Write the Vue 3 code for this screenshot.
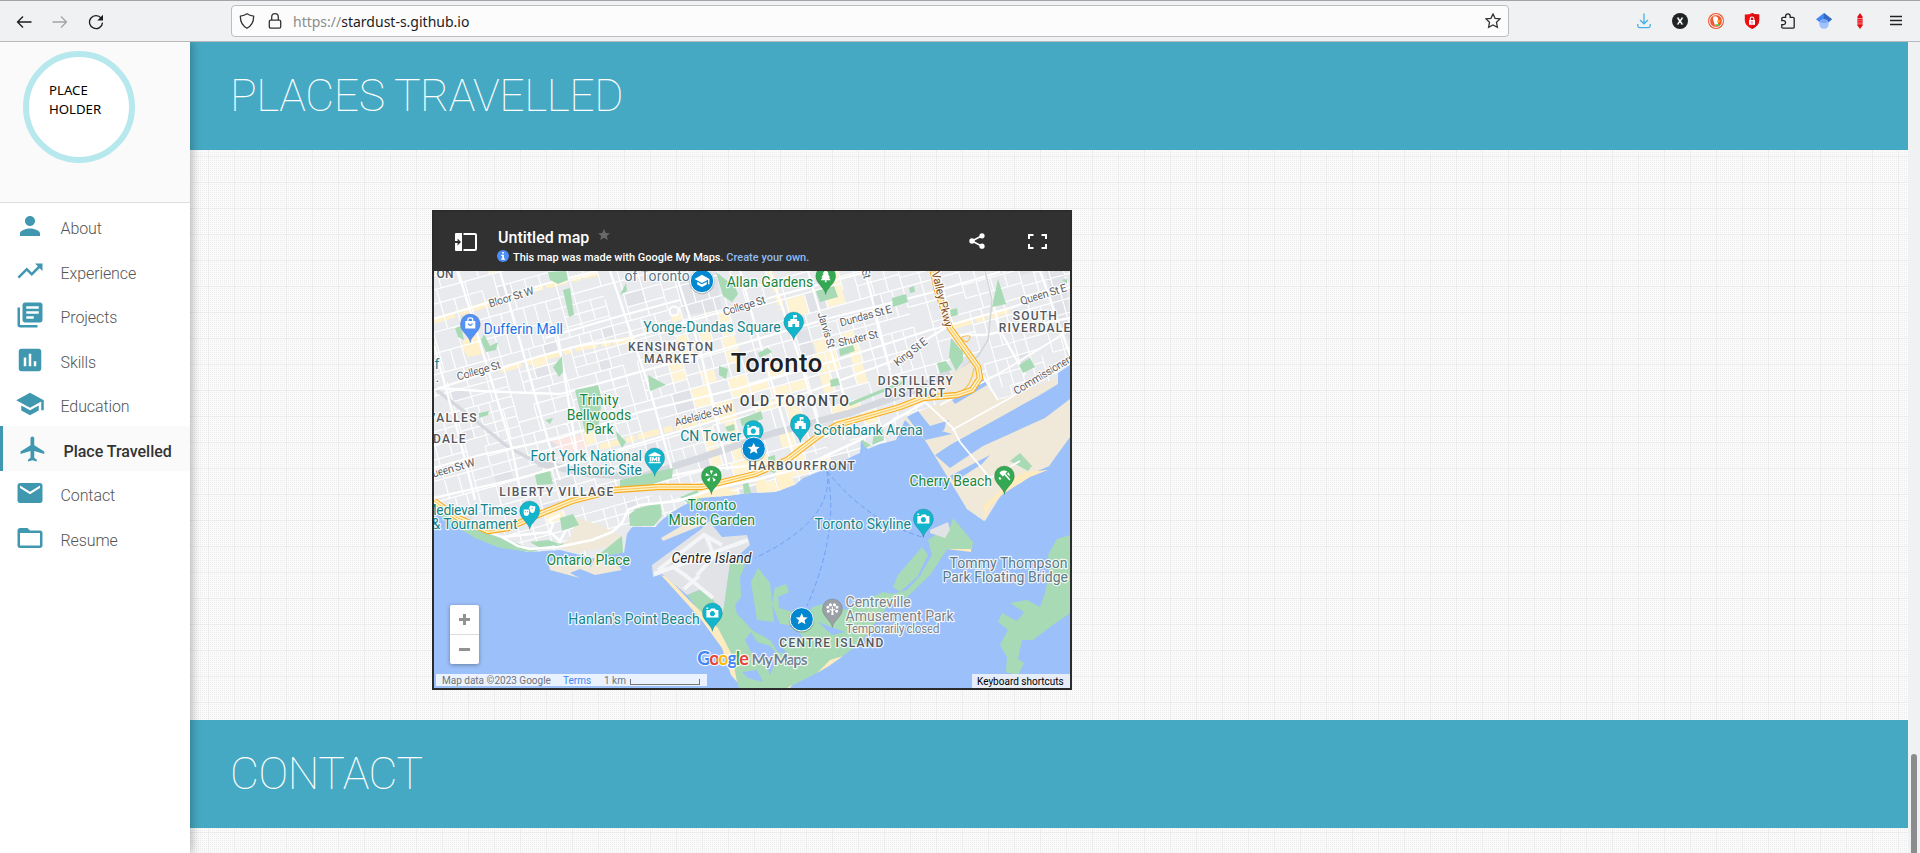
<script setup>
const menu = [
  { label: 'About', d: 'M12 12c2.21 0 4-1.79 4-4s-1.79-4-4-4-4 1.79-4 4 1.79 4 4 4zm0 2c-2.67 0-8 1.34-8 4v2h16v-2c0-2.66-5.33-4-8-4z' },
  { label: 'Experience', d: 'M16 6l2.29 2.29-4.88 4.88-4-4L2 16.59 3.41 18l6-6 4 4 6.3-6.29L22 12V6z' },
  { label: 'Projects', d: 'M4 6H2v14c0 1.1.9 2 2 2h14v-2H4V6zm16-4H8c-1.1 0-2 .9-2 2v12c0 1.1.9 2 2 2h12c1.1 0 2-.9 2-2V4c0-1.1-.9-2-2-2zm-1 9H9V9h10v2zm-4 4H9v-2h6v2zm4-8H9V5h10v2z' },
  { label: 'Skills', d: 'M19 3H5c-1.1 0-2 .9-2 2v14c0 1.1.9 2 2 2h14c1.1 0 2-.9 2-2V5c0-1.1-.9-2-2-2zM9 17H7v-7h2v7zm4 0h-2V7h2v10zm4 0h-2v-4h2v4z' },
  { label: 'Education', d: 'M5 13.18v4L12 21l7-3.82v-4L12 17l-7-3.82zM12 3L1 9l11 6 9-4.91V17h2V9L12 3z' },
  { label: 'Place Travelled', active: true, d: 'M21 16v-2l-8-5V3.5c0-.83-.67-1.5-1.5-1.5S10 2.67 10 3.5V9l-8 5v2l8-2.5V19l-2 1.5V22l3.5-1 3.5 1v-1.5L13 19v-5.5l8 2.5z' },
  { label: 'Contact', d: 'M20 4H4c-1.1 0-1.99.9-1.99 2L2 18c0 1.1.9 2 2 2h16c1.1 0 2-.9 2-2V6c0-1.1-.9-2-2-2zm0 4l-8 5-8-5V6l8 5 8-5v2z' },
  { label: 'Resume', d: 'M20 6h-8l-2-2H4c-1.1 0-1.99.9-1.99 2L2 18c0 1.1.9 2 2 2h16c1.1 0 2-.9 2-2V8c0-1.1-.9-2-2-2zm0 12H4V8h16v10z' },
]

// Labels: text, x, baseline, width, kind, rotation
const labels = [
  ['Dufferin Mall', 483, 333.7, 79.5, 'blue'],
  ['Yonge-Dundas Square', 642.8, 331.7, 137.5, 'teal'],
  ['CN Tower', 679.7, 440.7, 61, 'teal'],
  ['Scotiabank Arena', 813, 434, 109, 'teal'],
  ['Fort York National', 530, 460.7, 111.5, 'teal'],
  ['Historic Site', 566, 474.7, 75.5, 'teal'],
  ['Medieval Times', 424, 514, 93, 'teal'],
  ['& Tournament', 431, 528, 86, 'teal'],
  ["Hanlan's Point Beach", 567.8, 623, 131.5, 'teal'],
  ['Toronto Skyline', 814, 528.7, 96.5, 'teal'],
  ['f', 434, 368, 4, 'teal'],
  ['.', 435, 381.5, 3, 'teal'],
  ['Allan Gardens', 726.2, 286, 86.5, 'green'],
  ['Trinity', 579, 404.7, 39, 'green'],
  ['Bellwoods', 566.2, 419, 64.5, 'green'],
  ['Park', 585, 433, 28, 'green'],
  ['Ontario Place', 546, 564.7, 83.5, 'green'],
  ['Toronto', 687, 509.8, 48.8, 'green'],
  ['Music Garden', 668, 524, 86.5, 'green'],
  ['Cherry Beach', 909, 485.8, 82.5, 'green'],
  ['of Toronto', 624, 280, 65.3, 'slate'],
  ['Tommy Thompson', 949, 567, 118, 'slate'],
  ['Park Floating Bridge', 942, 581, 125.5, 'slate'],
  ['Centreville', 845, 606, 65.3, 'grey'],
  ['Amusement Park', 845, 620, 108, 'grey'],
  ['Temporarily closed', 845.3, 632, 93.8, 'grey small'],
  ['Centre Island', 671, 562.7, 80, 'island'],
  ['KENSINGTON', 627.4, 350, 85, 'area'],
  ['MARKET', 643.4, 362, 54, 'area'],
  ['VALLES', 427, 421, 49, 'area'],
  ['DALE', 432.5, 442.8, 32.5, 'area'],
  ['ON', 436, 277, 17, 'area'],
  ['SOUTH', 1012.2, 319, 44, 'area'],
  ['RIVERDALE', 998.2, 331, 71.5, 'area'],
  ['DISTILLERY', 877.3, 384, 75, 'area'],
  ['DISTRICT', 884, 396, 60.5, 'area'],
  ['HARBOURFRONT', 747.8, 469, 106.5, 'area'],
  ['LIBERTY VILLAGE', 498.8, 495, 114, 'area'],
  ['CENTRE ISLAND', 778.8, 646, 104, 'area'],
  ['OLD TORONTO', 739.3, 405, 109, 'district'],
  ['Toronto', 730.3, 371.7, 91.5, 'city'],
  ['Bloor St W', 489.5, 307, 46.5, 'road', -17],
  ['College St', 457.5, 380, 45, 'road', -16],
  ['College St', 723.7, 315.3, 44, 'road', -17],
  ['Jarvis St', 817, 313, 37, 'road', 73],
  ['St', 861, 270, 9, 'road', 75],
  ['Dundas St E', 840.5, 326, 53.5, 'road', -15.5],
  ['Shuter St', 838.7, 346, 40.5, 'road', -13],
  ['King St E', 897, 366.3, 39, 'road', -38],
  ['Queen St E', 1021, 304.5, 48, 'road', -17],
  ['Commissioners', 1015.7, 394.5, 69, 'road', -31],
  ['Adelaide St W', 675.3, 425.8, 60, 'road', -15],
  ['Queen St W', 426.5, 479, 50.5, 'road', -16],
  ['Valley Pkwy', 931, 272, 57, 'parkway', 76],
]

const pins = [
  [470.3, 342.7, '#5491f5', 'bag'],
  [825.7, 294.7, '#34a853', 'tree'],
  [793.7, 340.5, '#12b5cb', 'fort'],
  [800.3, 442.5, '#12b5cb', 'fort'],
  [753.3, 449, '#12b5cb', 'camera'],
  [654.7, 476.5, '#12b5cb', 'museum'],
  [711.4, 494.5, '#34a853', 'flower'],
  [529.7, 529.5, '#12b5cb', 'masks'],
  [712.4, 631.5, '#12b5cb', 'camera'],
  [1004.4, 494.5, '#34a853', 'beach'],
  [923.4, 537.5, '#12b5cb', 'camera'],
  [832.4, 627.5, '#9aa0a6', 'oak'],
]

const glyphs = {
  bag: 'M-5 -3.2H5V4.2H-5ZM-3 -3.2V-4.6Q-3 -7 0 -7Q3 -7 3 -4.6V-3.2H1.8V-4.6Q1.8 -5.8 0 -5.8Q-1.8 -5.8 -1.8 -4.6V-3.2ZM-2.8 -.6Q0 4.2 2.8 -.6L1.6 -1Q0 1.5 -1.6 -1Z',
  tree: 'M0 -7L3.2 -2.5H2L4.5 1.2H3L5 4H.8V6H-.8V4H-5L-3 1.2H-4.5L-2 -2.5H-3.2Z',
  fort: 'M-5.5 5V-1H-3.4V-3H-.6V-7H3.2V-4.6H.6V-3H3.4V-1H5.5V5H1.3V2H-1.3V5Z',
  camera: 'M-6 -3H-2.5L-1.5 -4.5H2.5L3.5 -3H6V4.5H-6ZM0 -2A2.6 2.6 0 1 0 .01 -2ZM-6 -5.6H-4.2V-4H-6Z',
  museum: 'M0 -6L6 -3V-1.8H-6V-3ZM-5 -1H-3.2V3.5H-5ZM3.2 -1H5V3.5H3.2ZM-2.6 3.5V-1H-1.4L0 1L1.4 -1H2.6V3.5H1.4V1.2L0 3L-1.4 1.2V3.5ZM-6 4H6V5.2H-6Z',
  flower: 'M0 -1.3L-1.6 -5.6H1.6ZM1.3 -.5L5.2 -3L6 -.1ZM1 1L4.6 3.9L2 5.7ZM-1 1L-2 5.7L-4.6 3.9ZM-1.3 -.5L-6 -.1L-5.2 -3Z',
  masks: 'M-6 -1.5H-.5V2Q-1 5 -3.2 5Q-6 5 -6 2ZM.5 -5.5L5.8 -4.6L5 0Q4 2.5 1.5 1.6L.2 0V-2.3L-1 -2.3ZM-4.8 .2H-3.8V1.2H-4.8ZM-2.6 .2H-1.6V1.2H-2.6ZM2 -3.4H3V-2.4H2Z',
  beach: 'M-6 2L-4.5 1L-3 2.6L-4.5 4ZM-5 -3A5.5 5.5 0 0 1 3 -4.5L1 -2.5L6 3.5L5 4.5L0 -1.2L-1.6 .4ZM4 -3.8A5.5 5.5 0 0 1 5.4 .5L2.5 -2.3Z',
  oak: 'M-1.2 6L-.7 2L-3 .2L-2.4 -.6L-.6 .6V-2.4H.6V.6L2.4 -.6L3 .2L.7 2L1.2 6ZM-2 -5.8A1.6 1.6 0 1 0 -1.9 -5.8ZM2 -5.8A1.6 1.6 0 1 0 2.1 -5.8ZM-4.6 -3.4A1.5 1.5 0 1 0 -4.5 -3.4ZM4.6 -3.4A1.5 1.5 0 1 0 4.7 -3.4ZM-4.2 .6A1.5 1.5 0 1 0 -4.1 .6ZM4.2 .6A1.5 1.5 0 1 0 4.3 .6Z',
}

// Land masses, parks and other filled areas
const mainland = 'M434 271H1070V437L1060 448 1049 466 1030 474 1022 482 1003 492 986 505 984 521 967 509 950 477 935 455 925 440 920 430 905 420 896 440 880 444 868 449 861 440 860 453 840 462 823 470 803 478 795 485 775 492 750 493 725 496 697 498 672 512 662 520 655 527 632 527 627 534 624 553 615 549 600 560 560 550 530 552 500 547 475 537 445 519 434 508Z'
const portlands = 'M903 418L952 398 983 384 1000 400 1070 373V437L1049 466 1030 474 1003 492 985 521 967 509 925 440Z'
const greens = [
  'M434 507L456 521 484 531 505 538 530 549 560 548 564 543 531 552 500 548 475 538 445 520Z',
  'M548 272L566 271 568 280 558 284 550 280Z', 'M563 290L570 288 574 315 569 317Z',
  'M455 328L461 326 464 340 458 337Z', 'M484 334L490 346 498 342 496 350 486 352 481 340Z',
  'M553 367L562 356 563 372 559 377Z', 'M575 390L598 385 602 399 598 430 585 432 580 410Z',
  'M648 375L666 385 650 391Z', 'M719 366L728 369 726 379 719 375Z', 'M716 272L735 287 738 294 732 302 723 296Z',
  'M816 291L834 286 838 297 820 302Z', 'M892 298L906 294 908 302 893 307Z', 'M909 288L914 286 915 292 910 293Z',
  'M998 279L1006 304 992 307Z', 'M950 310L957 308 958 315 951 317Z', 'M951 338L963 352 963 361 956 371 949 357Z',
  'M937 363L946 361 952 370 940 373Z', 'M839 349L853 345 855 351 840 356Z', 'M830 380L838 378 840 385 831 387Z',
  'M1019 365L1030 358 1035 367 1023 373Z', 'M620 486L620 480 673 468 672 478 640 488 622 490Z',
  'M740 419L761 411 763 419 742 426Z', 'M560 518L573 514 579 525 562 531Z', 'M629 515L636 509 660 502 662 516 654 526 630 526Z',
  'M535 475L550 471 553 484 537 485Z', 'M479 413L489 411 488 415 479 418Z', 'M545 420L553 418 550 424Z',
  'M848 403L905 380 905 383 850 406Z', 'M758 353L768 348 772 352 760 358Z', 'M725 427L734 424 735 430 728 432Z',
  'M865 448L861 439 872 446 874 433 883 429 884 440Z', 'M530 542L548 540 560 544 540 548Z', 'M1010 461L1020 453 1032 466 1028 471Z',
  'M616 431L626 442 622 448 617 438Z', 'M620 295L626 283 627 291Z', 'M1062 280L1067 279 1067 284Z', 'M680 497L697 490 702 500 690 505Z',
  'M743 484L748 482 751 493 744 494ZM768 457L775 455 776 474 768 470Z',
  'M597 556L622 536 623 552 618 554Z',
]
const islands = [
  'M730 563L743 560 745 566 740 577 741 597 735 605 737 614 745 622 752 630 768 637 793 627 813 607 830 602 845 610 883 592 893 594 907 590 920 576 932 555 928 540 940 532 948 535 947 549 930 575 907 597 887 607 860 643 840 658 817 673 787 688H739L730 660 716 632 687 595 705 588 723 613Z',
  'M922 547L928 555 917 577 900 592 893 587 898 575Z',
  'M953 518L973 542 972 550 945 549 948 533Z',
  'M758 568L770 583 774 622 757 620 751 582Z',
  'M775 588L786 584 789 592 778 597 779 608 793 612 798 626 780 624 772 604Z',
  'M1070 535L1057 539 1048 555 1050 570 1045 593 1040 607 1027 600 1010 603 1024 612 1017 621 1002 613 998 622 1008 630 1000 645 1007 657 1006 672 1018 675 1024 663 1018 659 1022 640 1033 640 1050 627 1070 613Z',
]
const lagoons = [
  'M741 598L757 620 772 625 796 630 805 638 790 637 780 645 789 655 778 652 770 640 755 632 748 624 738 614Z',
  'M745 640L751 632 757 642 770 646 778 655 770 675 765 662 754 658Z', 'M742 672L757 670 763 682 748 678Z',
  'M818 622L845 632 832 635Z',
]
const waters = [
  'M935 455L950 445 1040 395 1058 384 1058 373 1070 365V399L1045 418 983 446 950 468Z',
  'M907 417L918 411 930 426 950 420 938 430 952 434 925 440Z', 'M934 429L946 424 944 430 936 434Z',
  'M952 400L984 379 987 385 955 404Z', 'M950 476L990 455 982 464 954 482Z',
]
const beaches = [
  'M661 575L667 577 690 601 718 628 732 655 737 682 731 675 722 648 700 618Z',
  'M984 505L1003 488 1006 482 1025 472 1048 470 1030 477 1003 494 989 507 985 521Z',
  'M947 549L971 549 971 552ZM817 673L830 660 843 656 829 666Z', 'M787 688L792 685 790 688Z',
]
const sands = [
  'M570 538L577 518 600 525 621 536 618 545 590 550 575 552 558 547Z',
  'M548 563L557 558 575 564 580 557 591 567 597 553 606 551 604 565 617 564 622 570 595 575 580 569 570 573 580 578 550 570Z',
  'M661 538L700 515 706 522 700 526 663 541Z', 'M924 395L945 377 975 360 979 378 962 390Z',
]

// City blocks and side streets, laid out in the tilted frame of the street grid
let seed = 41
const rnd = () => { seed = (seed * 16807) % 2147483647; return seed / 2147483647 }
const TILT = (15.5 * Math.PI) / 180
const toPage = (u, v) => [434 + u * Math.cos(TILT) + v * Math.sin(TILT), 319 - u * Math.sin(TILT) + v * Math.cos(TILT)]
const creamBlocks = []
const greyBlocks = []
let sideStreets = ''
for (let u = -120; u < 740; u += 58) {
  for (let v = -110; v < 330; v += 41) {
    const [px, py] = toPage(u + 29, v + 20)
    const downtown = px > 700 && px < 850 && py > 290
    const cols = 3 + Math.floor(rnd() * 3)
    const rows = 1 + Math.floor(rnd() * 3)
    for (let i = 0; i < cols; i++) {
      const x = u + (58 * i) / cols
      const y0 = rnd() < 0.3 ? v + 41 / (rows + 1) : v
      const y1 = rnd() < 0.25 ? v + (41 * rows) / (rows + 1) : v + 41
      sideStreets += `M${x.toFixed(1)} ${y0.toFixed(1)}V${y1.toFixed(1)}`
      for (let j = 0; j <= rows; j++) {
        const box = { x: x + 0.8, y: v + (41 * j) / (rows + 1) + 0.8, w: 58 / cols - 1.6, h: 41 / (rows + 1) - 1.6 }
        const r = rnd()
        if (r < (downtown ? 0.32 : 0.02)) creamBlocks.push(box)
        else if (r > 0.95) greyBlocks.push(box)
      }
    }
    for (let j = 0; j <= rows; j++) {
      const a = rnd() < 0.3 ? 58 / cols : 0
      sideStreets += `M${(u + a).toFixed(1)} ${(v + (41 * j) / (rows + 1)).toFixed(1)}H${u + 58}`
    }
  }
}

const avenues = 'M434 319L480 305 545 284 597 271M434 390L470 378 537 357 582 345 622 340 700 318 780 295 870 271M438 388L480 391 560 394 640 372 720 350 830 318 930 293 1000 272M434 468L480 455 560 438 640 412 740 388 830 362 930 330 950 325 1010 308 1070 287M434 498L520 478 600 455 700 425 800 395 890 362 950 325M458 271L512 448 520 490M434 345L460 440 475 500M500 271L545 430 560 480M557 330L578 460M610 271L650 390 672 470M675 271L700 350 728 470M740 271L762 350 795 460M770 271L800 360 820 430M808 271L845 400M865 271L890 370M985 271L1000 330 1025 375M1040 271L1070 355M950 335L985 335 1070 318M640 482L700 470 760 465M545 338L620 316 680 300'
const lakeshore = 'M434 506L460 520 488 532 502 537 518 546 530 549 558 547 592 540 612 532 622 523 628 510 640 505 678 501 720 487 755 480 800 468 860 440 925 402M502 537L550 532 553 524 549 520 560 515M550 532L560 541 566 530'
const portRoads = 'M925 402L953 428 960 442 990 478M952 430L1010 398 1070 360M940 405L1000 373 1070 330M983 376L998 400M990 478L1020 461'
const expressway = 'M434 501L458 518 488 531 508 528 535 516 572 501 615 490 658 487 702 487 755 474 787 460 817 437 837 425 900 407 923 398 957 395 972 390 980 378 978 367 950 328 937 290 933 271'

const extensions = ['x', 'duck', 'shield', 'puzzle', 'scholar', 'crayon', 'menu']
const brand = [['G', '#4285f4'], ['o', '#ea4335'], ['o', '#fbbc04'], ['g', '#4285f4'], ['l', '#34a853'], ['e', '#ea4335']]
const starPath = 'M0 -6L1.8 -2.1 6 -1.8 2.8 .9 3.8 5 0 2.8 -3.8 5 -2.8 .9 -6 -1.8 -1.8 -2.1Z'
</script>

<template>
  <div class="browser">
    <header class="toolbar">
      <svg class="nav-icon back" viewBox="0 0 16 16"><path d="M15.5 8H1.5M7 2.5L1.5 8 7 13.5" /></svg>
      <svg class="nav-icon forward" viewBox="0 0 16 16"><path d="M.5 8H14.5M9 2.5L14.5 8 9 13.5" /></svg>
      <svg class="nav-icon reload" viewBox="0 0 16 16"><path d="M13.2 4.2A6.5 6.5 0 1 0 14.5 8.6" /><path class="solid" d="M15 .8V6.5H9.3Z" /></svg>
      <div class="address">
        <svg class="addr-shield" viewBox="0 0 16 16"><path d="M8 .8Q10.5 2.6 14.6 3.2Q15 11.5 8 15.3Q1 11.5 1.4 3.2Q5.5 2.6 8 .8Z" /></svg>
        <svg class="addr-lock" viewBox="0 0 16 16"><rect x="2.3" y="7.2" width="11.4" height="8" rx="1.4" /><path d="M4.7 7V4Q4.7 .7 8 .7Q11.3 .7 11.3 4V7" /></svg>
        <span class="url"><span class="scheme">https://</span>stardust-s.github.io</span>
        <svg class="addr-star" viewBox="-8 -8 16 16"><path d="M0 -7L2.1 -2.7 7 -2.1 3.5 1.3 4.4 6.3 0 4 -4.4 6.3 -3.5 1.3 -7 -2.1 -2.1 -2.7Z" /></svg>
      </div>
      <div class="extensions">
        <span class="ext"><svg viewBox="0 0 16 16"><path d="M8 .5V10.5M4 7L8 10.8 12 7M1.8 11V12.8Q1.8 14.6 3.6 14.6H12.4Q14.2 14.6 14.2 12.8V11" fill="none" stroke="#45b0e6" stroke-width="1.3" /></svg></span>
        <span v-for="name in extensions" :key="name" class="ext">
          <svg viewBox="0 0 16 16">
            <g v-if="name === 'x'">
              <circle cx="8" cy="8" r="8" fill="#202325" />
              <path d="M5.8 5.2L10 10.8M10.2 5.2L6 10.8" stroke="#fff" stroke-width="1.5" />
              <path d="M4.9 5H7.2M9 5H11.1M4.9 11.1H7M8.8 11.1H11.2" stroke="#fff" stroke-width=".8" />
            </g>
            <g v-else-if="name === 'duck'">
              <circle cx="8" cy="8" r="8" fill="#ee5a37" /><circle cx="8" cy="8" r="6.4" fill="none" stroke="#fff" stroke-width="1" />
              <path d="M5.2 3.8Q8.5 2.4 10 5V12.6Q7.4 13.4 6.6 11.5L5 6Z" fill="#fff" />
              <path d="M9 7.5L12.6 7 11.4 9.4H9Z" fill="#fdb90a" /><path d="M6.6 11.4L11.4 11V13H8Z" fill="#66bd47" />
            </g>
            <g v-else-if="name === 'shield'">
              <path d="M8 0Q11 1.8 15.2 1.5V7.5Q15 13 8 16Q1 13 .8 7.5V1.5Q5 1.8 8 0Z" fill="#f60d12" />
              <path d="M8 0Q11 1.8 15.2 1.5V7.5Q15 13 8 16Z" fill="#d70d12" />
              <path d="M5 7H11V11.8H5Z" fill="#fff" /><path d="M6.2 7V5.6Q6.2 4 8 4Q9.8 4 9.8 5.6V7" fill="none" stroke="#fff" stroke-width="1.1" />
              <path d="M7.6 8.3H8.4V10.4H7.6Z" fill="#d70d12" />
            </g>
            <path v-else-if="name === 'puzzle'" d="M5.6 4.4V3Q5.8 .8 7.9 .8Q10 .8 10.2 3V4.4H13Q14.2 4.4 14.2 5.6V14Q14.2 15.2 13 15.2H3Q1.8 15.2 1.8 14V11.6H3.8Q5.6 11.3 5.6 9.6Q5.6 8 3.8 7.7H1.8V5.4Q1.8 4.4 3 4.4Z" fill="none" stroke="#222" stroke-width="1.3" />
            <g v-else-if="name === 'scholar'">
              <path d="M8 0L16 6.3 12 9.5H4L0 6.3Z" fill="#4285f4" /><path d="M8 0L16 6.3 12 9.5 8 7Z" fill="#356ac3" />
              <circle cx="8" cy="11" r="4.8" fill="#a0c3ff" /><path d="M3.7 9Q8 4.5 12.3 9Q10 10 8 10Q6 10 3.7 9Z" fill="#76a7fa" />
            </g>
            <g v-else-if="name === 'crayon'">
              <path d="M8 0L10.6 3.8V12.2L8 16 5.4 12.2V3.8Z" fill="#e60b12" /><path d="M5 5.5H11M5 10.9H11" stroke="#f6b4b6" stroke-width=".7" /><path d="M5 7.3H11M5 9.2H11" stroke="#f08a8d" stroke-width=".7" />
            </g>
            <path v-else d="M2 3.5H14M2 7.5H14M2 11.5H14" stroke="#222" stroke-width="1.3" />
          </svg>
        </span>
      </div>
    </header>

    <div class="page">
      <aside class="sidebar">
        <div class="profile"><div class="avatar">PLACE<br>HOLDER</div></div>
        <nav class="menu">
          <a v-for="m in menu" :key="m.label" class="item" :class="{ active: m.active }">
            <svg viewBox="0 0 24 24"><path :d="m.d" /></svg>
            <span>{{ m.label }}</span>
          </a>
        </nav>
      </aside>

      <main class="content">
        <h1 class="banner">PLACES TRAVELLED</h1>
        <section class="travel">
          <div class="map">
            <div class="map-head">
              <svg class="panel-icon" viewBox="0 0 22 18">
                <path d="M1 0H7V18H1Q0 18 0 17V1Q0 0 1 0Z" fill="#fff" />
                <path d="M0 8H2.6V5.4L6 9 2.6 12.6V10H0Z" fill="#303130" />
                <path d="M8.5 1H20Q21 1 21 2V16Q21 17 20 17H8.5" fill="none" stroke="#fff" stroke-width="2" />
              </svg>
              <div class="titles">
                <div class="map-title">Untitled map<svg viewBox="-6 -6 12 12"><path :d="starPath" /></svg></div>
                <div class="map-sub">
                  <svg viewBox="0 0 12 12"><circle cx="6" cy="6" r="6" fill="#4d8df6" /><path d="M5.1 2H7V3.6H5.1ZM4.2 4.8H7V8.5H8V9.7H4.2V8.5H5.2V6H4.2Z" fill="#fff" /></svg>
                  <span class="sub-text">This map was made with Google My Maps. <a>Create your own.</a></span>
                </div>
              </div>
              <svg class="share" viewBox="0 0 16 16"><path d="M13 2.8L3 8 13 13.2" fill="none" stroke="#fff" stroke-width="1.6" /><circle cx="13" cy="2.8" r="2.6" /><circle cx="3" cy="8" r="2.7" /><circle cx="13" cy="13.2" r="2.6" /></svg>
              <svg class="full" viewBox="0 0 19 15"><path d="M1 5V1H5.5M13.5 1H18V5M18 10V14H13.5M5.5 14H1V10" fill="none" stroke="#fff" stroke-width="2" /></svg>
            </div>

            <div class="map-body">
              <svg class="canvas" viewBox="434 271 636 417" width="636" height="417">
                <defs><clipPath id="land"><path :d="mainland" /></clipPath></defs>
                <rect x="434" y="271" width="636" height="417" fill="#9cc0f9" />
                <path :d="mainland" fill="#e8eaed" />
                <g clip-path="url(#land)">
                  <g transform="translate(434 319) rotate(-15.5)">
                    <rect v-for="(b, i) in creamBlocks" :key="'c' + i" :x="b.x" :y="b.y" :width="b.w" :height="b.h" fill="#fef3d3" />
                    <rect v-for="(b, i) in greyBlocks" :key="'g' + i" :x="b.x" :y="b.y" :width="b.w" :height="b.h" fill="#e0e2e7" />
                  </g>
                  <path d="M434 321L545 286 597 273M500 370L582 347 640 338M600 447L700 421 740 410M950 327L1010 310M770 271L782 310" fill="none" stroke="#fef1cc" stroke-width="6" stroke-dasharray="22 5 9 3" />
                  <path d="M463 340L478 336 483 354 468 357 462 348Z" fill="#fef1cc" />
                  <path d="M552 441L584 434 587 448 566 453Z" fill="#fbe6e3" />
                  <path d="M1066 271H1045L1060 330 1070 340ZM675 276L716 272 722 310 685 315Z" fill="#e0e2e7" />
                  <g transform="translate(434 319) rotate(-15.5)"><path :d="sideStreets" fill="none" stroke="#fff" stroke-width="1.15" /></g>
                  <path d="M434 388L470 416 508 447 538 463" fill="none" stroke="#d5d8de" stroke-width="3.4" />
                  <path d="M538 463L590 474 640 477 700 458 773 433 850 413 915 390 950 372" fill="none" stroke="#d5d8de" stroke-width="7" />
                  <path :d="avenues" fill="none" stroke="#fff" stroke-width="2.3" />
                  <path d="M530 551L505 540 500 531 545 512 620 494 700 492 760 480 800 465 850 440" fill="none" stroke="#e8eaed" stroke-width="5" />
                  <path d="M985 271L992 300 988 340 978 356 940 384" fill="none" stroke="#d3d6db" stroke-width="1.6" />
                </g>
                <path :d="portlands" fill="#f0e8d8" />
                <path v-for="(d, i) in sands" :key="'s' + i" :d="d" fill="#f0e8d8" />
                <path v-for="(d, i) in waters" :key="'w' + i" :d="d" fill="#9cc0f9" />
                <path v-for="(d, i) in greens" :key="'p' + i" :d="d" fill="#a8dab5" />
                <path d="M690 500L705 488 725 484 735 495 700 498ZM775 472L786 466 795 484 779 491ZM756 482L765 478 768 492 757 492Z" fill="#fef1cc" />
                <path v-for="(d, i) in islands" :key="'i' + i" :d="d" fill="#a8dab5" />
                <path v-for="(d, i) in lagoons" :key="'l' + i" :d="d" fill="#9cc0f9" />
                <path v-for="(d, i) in beaches" :key="'b' + i" :d="d" fill="#feecc0" />
                <path d="M652 565L700 530 709 521 722 537 747 535 750 545 730 563 723 613 704 588 687 595 662 574 653 577Z" fill="#e1e3e7" />
                <path d="M654 574L748 540M658 570L704 535 722 545M672 566L685 575 713 598M699 576L684 589M706 536L714 556 697 575" fill="none" stroke="#f4f5f7" stroke-width="4" />
                <path d="M930 530L948 522 950 530 945 538 930 533Z" fill="#e1e3e7" />
                <path :d="portRoads" fill="none" stroke="#fff" stroke-width="1.8" />
                <path :d="lakeshore" fill="none" stroke="#fff" stroke-width="2.6" stroke-linejoin="round" />
                <g fill="none" stroke-linejoin="round">
                  <path d="M962 337Q975 333 967 342Q960 340 962 337ZM974 368Q972 385 960 393" stroke="#fbc04b" stroke-width="1.2" />
                  <path :d="expressway" stroke="#f9ab1a" stroke-width="6.4" />
                  <path :d="expressway" stroke="#feefc0" stroke-width="4.2" />
                  <path :d="expressway" stroke="#fbc04b" stroke-width=".9" />
                </g>
                <path d="M827 471Q835 520 755 558M827 471Q840 530 807 606M827 471Q865 520 922 537" fill="none" stroke="#6fa1f3" stroke-width="1" stroke-dasharray="5 3" />
                <circle cx="674" cy="311" r="4.5" fill="#e8eaed" stroke="#fff" stroke-width="2" />

                <g transform="translate(.5 .5)">
                  <text v-for="(l, i) in labels" :key="'t' + i" :class="l[4]" :x="l[1]" :y="l[2]" :textLength="l[3]" :transform="l[5] ? `rotate(${l[5]} ${l[1]} ${l[2]})` : undefined">{{ l[0] }}</text>
                </g>

                <g v-for="(p, i) in pins" :key="'pin' + i" :transform="`translate(${p[0]} ${p[1]})`">
                  <path d="M0 0C-1 -7 -10 -11 -10 -18.6A10 10 0 0 1 10 -18.6C10 -11 1 -7 0 0Z" :fill="p[2]" stroke="#0000002e" stroke-width=".7" />
                  <path :d="glyphs[p[3]]" transform="translate(0 -18.4)" fill="#fff" fill-rule="evenodd" />
                </g>

                <g v-for="(c, i) in [[702, 281], [753.7, 448.8], [801.7, 619.3]]" :key="'m' + i" :transform="`translate(${c[0]} ${c[1]})`">
                  <circle cy=".7" r="12.6" fill="#00000030" />
                  <circle r="11.7" fill="#0288d1" stroke="#fff" stroke-width="1" />
                  <path v-if="i" :d="starPath" fill="#fff" />
                  <path v-else transform="translate(-8.2 -8.2) scale(.68)" :d="menu[4].d" fill="#fff" />
                </g>

                <text class="logo" x="697.3" y="664.5" textLength="51.5"><tspan v-for="(b, i) in brand" :key="i" :fill="b[1]">{{ b[0] }}</tspan></text>
                <text class="mymaps" x="751.5" y="664.5" textLength="56">My Maps</text>
              </svg>
              <div class="zoom"><span class="plus"></span><span class="minus"></span></div>
              <div class="credits">
                <span class="data">Map data ©2023 Google</span><span class="terms">Terms</span><span class="km">1 km</span><i></i>
              </div>
              <div class="shortcuts">Keyboard shortcuts</div>
            </div>
          </div>
        </section>
        <h1 class="banner">CONTACT</h1>
      </main>
      <div class="scrollbar"><div class="thumb"></div></div>
    </div>
  </div>
</template>

<style>
body { overflow: hidden; }
</style>

<style scoped>
* { box-sizing: border-box; }
svg { display: block; flex: none; }
.browser { width: 1920px; height: 853px; overflow: hidden; display: flex; flex-direction: column; font-family: Roboto, "Liberation Sans", sans-serif; }
.toolbar { height: 42px; flex: none; display: flex; align-items: center; background: #f0f1f3; border-top: 1px solid #a4a4a8; border-bottom: 1px solid #b9b9bd; }
.nav-icon { width: 16px; height: 16px; margin-top: 2px; fill: none; stroke: #1c1c1e; stroke-width: 1.3; }
.back { margin-left: 16px; }
.forward { margin-left: 20px; stroke: #a3a4a7; }
.reload { margin-left: 20px; }
.solid { fill: #1c1c1e; stroke: none; }
.address { width: 1278px; height: 32px; margin-left: 127px; border: 1px solid #bdbdc0; border-radius: 4px; background: #fcfcfc; display: flex; align-items: center; }
.address svg { width: 16px; height: 16px; fill: none; stroke: #333; stroke-width: 1.3; }
.addr-shield { margin-left: 7px; }
.addr-lock { margin-left: 12px; }
.addr-star { margin-right: 7px; }
.url { margin-left: 10px; flex: 1; font: 14px "Noto Sans", sans-serif; color: #1b1b1d; }
.scheme { color: #8c8c8e; }
.extensions { display: flex; margin-left: 117px; }
.ext { width: 36px; display: flex; justify-content: center; }
.ext svg { width: 16px; height: 16px; }
.page { flex: 1; display: flex; min-height: 0; overflow: hidden; }
.sidebar { width: 190px; flex: none; background: #fff; box-shadow: 2px 0 9px rgba(0, 0, 0, .28); z-index: 1; }
.profile { height: 161px; padding: 9px 23px; background: #fafafa; border-bottom: 1px solid #dcdcdc; }
.avatar { width: 112px; height: 112px; border: 6px solid #b6e8ed; border-radius: 50%; background: #fff; padding: 24px 0 0 20px; font: 13.2px/19px "Noto Sans", sans-serif; color: #000; }
.menu { padding-top: .5px; }
.item { height: 44.5px; display: flex; padding-left: 15px; color: #555; font-size: 16px; font-weight: 300; letter-spacing: -.1px; }
.item svg { width: 30px; height: 30px; margin-top: 7.5px; fill: #4097b0; }
.item span { margin-left: 15.5px; padding-top: 3.7px; line-height: 44.5px; white-space: nowrap; }
.item.active { background: #fafafa; border-left: 3px solid #4097b0; color: #333; font-weight: 500; letter-spacing: -.03px; }
.content { width: 1718px; flex: none; background-color: #fbfbfb;
  background-image: linear-gradient(90deg, #ebebeb 1px, transparent 1px), linear-gradient(#ebebeb 1px, transparent 1px), conic-gradient(at 1px 1px, transparent 75%, #ececec 0);
  background-size: 26px 26px, 26px 26px, 2px 2px; background-position: 18px 10px, 18px 10px, 0 0; }
.banner { margin: 0; height: 108px; padding-left: 40px; background: #46a9c3; color: #fff; font-size: 44.6px; font-weight: 100; line-height: 109px; letter-spacing: -.45px; }
.travel { height: 570px; padding: 60px 0 0 242px; }
.map { width: 640px; height: 480px; border: 2px solid #2b2c2c; }
.map-head { height: 59px; background: #303130; display: flex; color: #fff; }
.panel-icon { width: 22px; height: 18px; margin: 21px 0 0 21px; }
.titles { width: 478px; margin-left: 21px; padding-top: 16px; }
.map-title { display: flex; font-size: 16px; font-weight: 500; line-height: 20px; height: 22px; }
.map-title svg { width: 12px; height: 12px; margin: 1px 0 0 9px; fill: #686a69; }
.map-sub { display: flex; height: 13px; }
.map-sub svg { width: 12px; height: 12px; margin-left: -1px; }
.sub-text { font-size: 11px; font-weight: 500; line-height: 15px; margin-left: 4px; white-space: nowrap; }
.sub-text a { color: #8ebbf0; }
.share { width: 16px; height: 16px; margin-top: 21px; margin-left: -7.5px; fill: #fff; }
.full { width: 19px; height: 15px; margin: 22px 0 0 43.5px; }
.map-body { position: relative; height: 417px; overflow: hidden; }
.canvas text { font-size: 14px; paint-order: stroke; stroke: #fff; stroke-width: 2.4px; stroke-linejoin: round; stroke-opacity: .85; }
.canvas .teal { fill: #12858d; }
.canvas .green { fill: #1b873f; }
.canvas .blue { fill: #1a73e8; }
.canvas .slate { fill: #5b7a8a; }
.canvas .grey { fill: #7c8288; }
.canvas .small { font-size: 12px; }
.canvas .island { font-style: italic; fill: #26282b; }
.canvas .area { font-size: 12px; font-weight: 500; fill: #55595e; }
.canvas .district { font-size: 14px; font-weight: 500; fill: #44484c; }
.canvas .city { font-size: 25.5px; font-weight: 500; fill: #202124; }
.canvas .road { font-size: 11px; fill: #5c6064; }
.canvas .parkway { font-size: 11.5px; fill: #87501c; }
.canvas .logo { font-family: Lato, sans-serif; font-size: 18px; font-weight: 700; }
.canvas .mymaps { font-family: Lato, sans-serif; font-size: 15.5px; font-weight: 700; fill: #718493; }
.zoom { position: absolute; left: 16px; top: 334px; width: 29px; height: 59px; background: #fff; border-radius: 2px; box-shadow: 0 1px 4px rgba(0, 0, 0, .35); display: flex; flex-direction: column; }
.zoom span { flex: 1; background: linear-gradient(#929292, #929292) center / 11px 3px no-repeat; }
.zoom .plus { border-bottom: 1px solid #dcdcdc; background: linear-gradient(#929292, #929292) center / 11px 3px no-repeat, linear-gradient(#929292, #929292) center / 3px 11px no-repeat; }
.credits { position: absolute; left: 2px; top: 403px; width: 271px; height: 12px; padding-left: 6px; background: rgba(245, 248, 255, .88); display: flex; font-size: 10px; line-height: 13px; color: #707479; white-space: nowrap; }
.credits .data { width: 121px; }
.credits .terms { width: 41px; color: #4285f4; }
.credits .km { width: 26px; }
.credits i { width: 70px; height: 6px; margin-top: 5px; border: 1px solid #777; border-top: 0; }
.shortcuts { position: absolute; right: 0; top: 403px; width: 98px; height: 14px; padding-left: 5px; background: rgba(240, 242, 246, .9); color: #000; font-size: 10px; line-height: 16px; white-space: nowrap; }
.scrollbar { width: 12px; background: #f0f1f3; padding: 712px 3px 0; }
.thumb { height: 120px; border-radius: 3px; background: #8a8c8d; }
</style>
